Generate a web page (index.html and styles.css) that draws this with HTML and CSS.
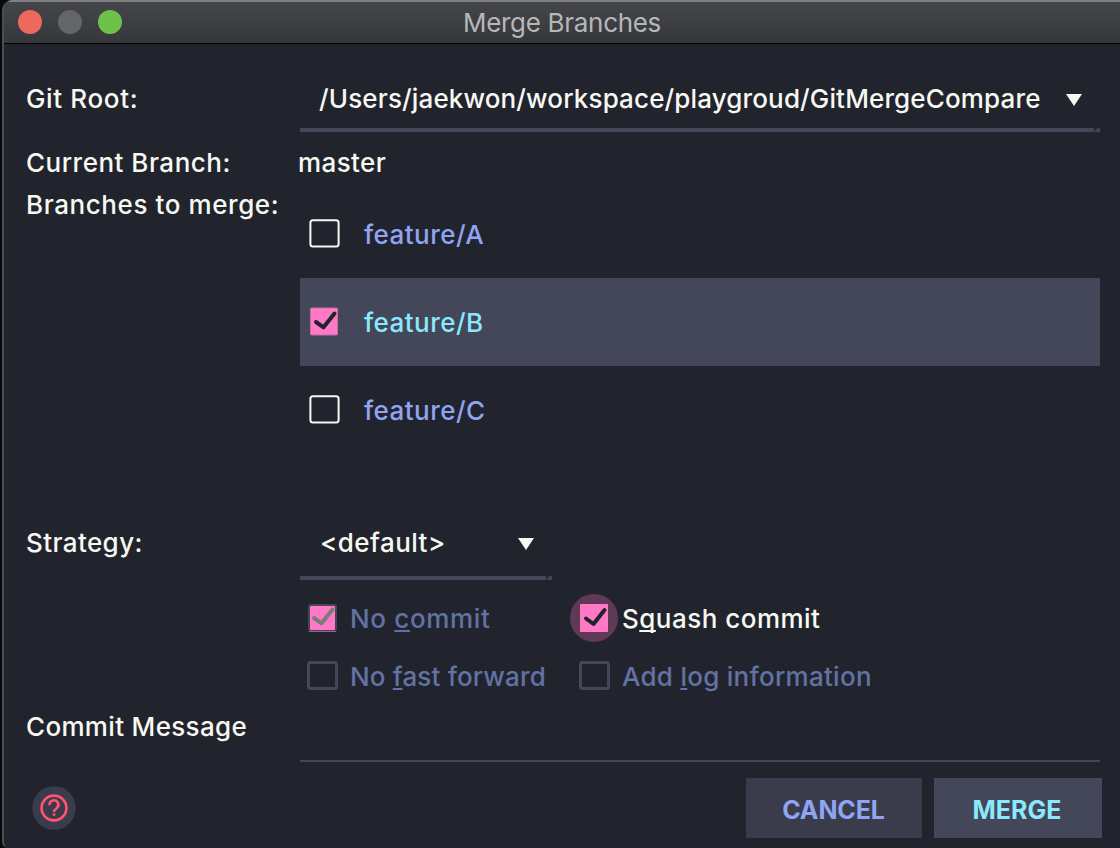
FILE: index.html
```html
<!DOCTYPE html>
<html lang="en">
<head>
<meta charset="utf-8">
<title>Merge Branches</title>
<link rel="stylesheet" href="styles.css">
</head>
<body>
<main class="window">
  <header class="titlebar">
    <div class="lights"><i class="light red"></i><i class="light gray"></i><i class="light green"></i></div>
    <h1 class="title">Merge Branches</h1>
  </header>
  <form class="form">
    <div class="row root-row">
      <label class="label git-label">Git Root:</label>
      <div class="combo">
        <span class="combo-text path-text">/Users/jaekwon/workspace/playgroud/GitMergeCompare</span>
        <svg class="arrow" width="16" height="12" viewBox="0 0 16 12"><path d="M0 0H16L8 12Z"/></svg>
        <i class="corner"></i>
      </div>
    </div>
    <div class="row current-row">
      <span class="label current-label">Current Branch:</span>
      <span class="master">master</span>
    </div>
    <div class="row branches-row">
      <span class="label branches-label">Branches to merge:</span>
      <ul class="branches">
        <li class="branch">
          <svg class="box" width="32" height="30" viewBox="0 0 32 30"><rect class="outline" x="2.4" y="2.2" width="28.2" height="26.2" rx="2.5"/></svg>
          <span>feature/A</span></li>
        <li class="branch selected">
          <svg class="box" width="32" height="30" viewBox="0 0 32 30"><rect class="fill rim" x="2.5" y="2" width="27" height="27" rx="1"/><path class="tick" d="M8 16L15.5 21.3L26.5 7.5"/></svg>
          <span>feature/B</span></li>
        <li class="branch">
          <svg class="box" width="32" height="30" viewBox="0 0 32 30"><rect class="outline" x="2.4" y="2.2" width="28.2" height="26.2" rx="2.5"/></svg>
          <span>feature/C</span></li>
      </ul>
    </div>
    <div class="row strategy-row">
      <label class="label strategy-label">Strategy:</label>
      <div class="combo short">
        <span class="combo-text default-text">&lt;default&gt;</span>
        <svg class="arrow" width="16" height="12" viewBox="0 0 16 12"><path d="M0 0H16L8 12Z"/></svg>
        <i class="corner"></i>
      </div>
    </div>
    <div class="options">
      <div class="option">
        <svg class="box" width="32" height="30" viewBox="0 0 32 30"><rect class="fill dim-rim" x="3" y="2" width="27" height="26" rx="2"/><path class="rim-foot" d="M3 28.5H30"/><path class="tick dim-tick" d="M8 15L15.5 20.3L26.5 6.5"/></svg>
        <span class="t-commit">No <u>c</u>ommit</span></div>
      <div class="option active">
        <svg class="box" width="48" height="48" viewBox="0 0 48 48"><circle class="halo" cx="24" cy="24" r="24"/><rect class="fill" x="10" y="10" width="28" height="28" rx="1"/><path class="tick" d="M16 24.5L23.5 30L34.5 16"/></svg>
        <span class="t-squash">S<u>q</u>uash commit</span></div>
      <div class="option">
        <svg class="box" width="32" height="30" viewBox="0 0 32 30"><rect class="dim-outline" x="2.5" y="1.5" width="28" height="26" rx="2"/></svg>
        <span class="t-ff">No <u>f</u>ast forward</span></div>
      <div class="option">
        <svg class="box" width="32" height="30" viewBox="0 0 32 30"><rect class="dim-outline" x="2.5" y="1.5" width="28" height="26" rx="2"/></svg>
        <span class="t-log">Add <u>l</u>og information</span></div>
    </div>
    <div class="row message-row">
      <label class="label message-label">Commit Message</label>
      <div class="message"></div>
    </div>
    <footer class="footer">
      <svg class="help" width="44" height="44" viewBox="0 0 44 44"><circle class="help-bg" cx="22" cy="22" r="21.8"/><circle class="help-ring" cx="22" cy="22" r="12.4"/><path class="help-ring" d="M17.6 19.3A4.4 4.4 0 1 1 24.6 22.2Q22 24 22 26"/><path class="help-dot" d="M20.8 27.2H23.3V29.7H20.8Z"/></svg>
      <button type="button" class="btn cancel">CANCEL</button>
      <button type="button" class="btn merge">MERGE</button>
    </footer>
  </form>
</main>
</body>
</html>
```
FILE: styles.css
```css
* { box-sizing: border-box; }
body { margin: 0; background: #08090b; }
.window {
  width: 1118px; height: 848px; margin-left: 2px; overflow: hidden;
  border-left: 2px solid #4c4d53; border-top-left-radius: 10px; border-bottom-left-radius: 6px;
  background: #22242d; color: #f8f8f2;
  font: 500 26px/30px Inter, "Liberation Sans", sans-serif;
}
.titlebar {
  display: grid; grid-template-columns: 1fr auto 1fr; align-items: center; height: 44px;
  border-top: 2px solid #7e8083; border-bottom: 1px solid #000;
  background: linear-gradient(#45464a, #36373a);
}
.lights { display: flex; gap: 16px; padding-left: 14px; }
.light { width: 24px; height: 24px; border-radius: 50%; margin-top: -1px; }
.red { background: #ed695e; }
.gray { background: #646568; }
.green { background: #70c149; }
.title { margin: 0; font-size: 26px; font-weight: 400; letter-spacing: -0.3px; color: #b6b7b9; }
.form { display: flex; flex-direction: column; padding-top: 24px; }
.row { display: grid; grid-template-columns: 274px 1fr; padding-left: 22px; }
.label, .combo-text, .master, .branch span, .option span { white-space: nowrap; }
.root-row { height: 64px; }
.git-label { padding-top: 16px; letter-spacing: 0.65px; }
.path-text { letter-spacing: 0.14px; margin-left: -1px; }
.combo {
  position: relative; display: flex; justify-content: space-between; align-items: flex-start;
  width: 800px; height: 64px; padding: 16px 18px 0 20px; border-bottom: 4px solid #44475a;
}
.corner {
  position: absolute; right: 0; bottom: -4px; width: 6px; height: 4px;
  background: radial-gradient(circle at 5px 4px, #44475a 3.5px, #22242d 4.5px);
}
.arrow { margin-top: 10px; fill: #f8f8f2; flex: none; }
.current-row { margin-top: 16px; height: 30px; }
.current-label { letter-spacing: 0.5px; }
.master { margin-left: -2px; letter-spacing: 0.4px; }
.branches-row { margin-top: 12px; height: 326px; }
.branches-label { letter-spacing: 0.58px; }
.branches { width: 800px; margin: 0; padding: 0; list-style: none; }
.branch { display: flex; align-items: center; gap: 24px; height: 88px; padding-left: 8px; color: #8fa5f3; letter-spacing: 0.45px; }
.branch .box { margin-top: -2px; }
.branch span { padding-top: 2px; }
.selected { background: #44475a; color: #8be9fd; }
.strategy-label { padding-top: 12px; letter-spacing: 0.4px; }
.default-text { letter-spacing: 0.45px; }
.strategy-row { height: 64px; }
.short { width: 252px; padding-top: 12px; }
.options {
  display: grid; grid-template-columns: 264px 1fr; grid-auto-rows: 58px;
  margin-top: 10px; padding-left: 302px;
}
.option { display: flex; align-items: center; gap: 12px; color: #6272a4; }
.option .box { margin-top: -2px; flex: none; }
.option:nth-child(even) { padding-left: 8px; }
.option.active { padding-left: 0; gap: 4px; color: #f8f8f2; }
.option u { text-decoration-thickness: 2px; text-underline-offset: 2px; text-decoration-skip-ink: none; }
.t-commit { letter-spacing: 0.65px; }
.t-squash { letter-spacing: 0.48px; }
.t-ff { letter-spacing: 0.17px; }
.t-log { letter-spacing: 0.27px; }
.box, .help { fill: none; }
.outline { stroke: #f8f8f2; stroke-width: 2; }
.dim-outline { stroke: #44475a; stroke-width: 3; }
.fill { fill: #ff79c6; }
.rim { stroke: #c76aa5; stroke-width: 1; }
.dim-rim { stroke: #44475a; stroke-width: 2; }
.rim-foot { stroke: #a65b8b; stroke-width: 1; }
.halo { fill: #5f3955; }
.tick { stroke: #22242d; stroke-width: 4; stroke-linecap: round; stroke-linejoin: round; }
.dim-tick { stroke: #7b7b79; }
.message-row { margin-top: 6px; height: 50px; }
.message-label { letter-spacing: 0.33px; }
.message { width: 800px; border-bottom: 2px solid #44475a; }
.footer { display: flex; align-items: center; margin-top: 16px; padding: 0 18px 0 28px; height: 60px; }
.help { margin-right: auto; }
.help-bg { fill: #3a3c4c; }
.help-ring { stroke: #ff5370; stroke-width: 2.6; }
.help-dot { fill: #ff5370; }
.btn { height: 60px; border: 0; padding: 3px 2px 0 0; font: 700 25px/30px Inter, "Liberation Sans", sans-serif; }
.cancel { width: 176px; margin-right: 12px; background: #3a3c4c; color: #8fa5f3; padding-right: 1px; letter-spacing: -0.1px; }
.merge { width: 168px; background: #44475a; color: #8be9fd; }
```
